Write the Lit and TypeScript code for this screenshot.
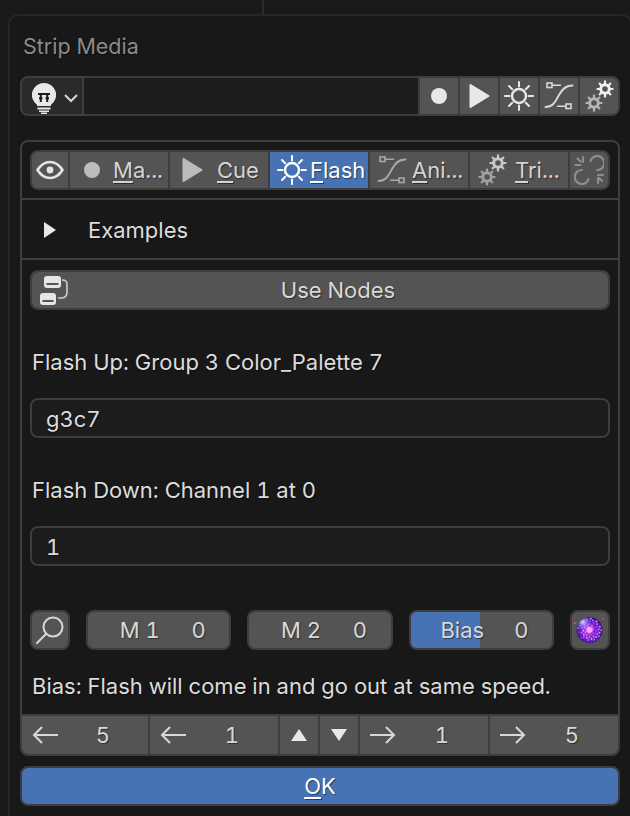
import { LitElement, html, css, svg } from "lit";
import { customElement } from "lit/decorators.js";

const sun = (c: string) => svg`<svg class="ic" width="30" height="30" viewBox="0 0 30 30" fill="none" stroke=${c} stroke-width="2" stroke-linecap="round">
  <circle cx="15" cy="15" r="7" stroke-width="2.4"/>
  <path d="M15 1v4.5M15 24.5V29M1 15h4.5M24.5 15H29M5 5l3.2 3.2M21.8 21.8 25 25M25 5l-3.2 3.2M8.2 21.8 5 25"/></svg>`;
const curve = (c: string) => svg`<svg class="ic" width="30" height="30" viewBox="0 0 30 30" fill="none" stroke=${c} stroke-linecap="round">
  <rect x="3" y="2" width="5" height="4.500" stroke-width="1.600"/><path d="M8.500 4.200h8" stroke-width="1.600"/>
  <rect x="22" y="23" width="5" height="4.500" stroke-width="1.600"/><path d="M13.500 25.200h8" stroke-width="1.600"/>
  <path d="M1.500 26C10 26 12 19 15 14S21 4.500 28.500 4.500" stroke-width="2"/></svg>`;
const gearAt = (x: number, y: number, c: string) => {
  const rays = [0, 45, 90, 135].map(a => {
    const r = a * Math.PI / 180, dx = Math.cos(r) * 8.4, dy = Math.sin(r) * 8.4;
    return svg`<path d="M${x - dx} ${y - dy}L${x + dx} ${y + dy}" stroke-width="2.200"/>`;
  });
  return svg`<g stroke=${c} fill="none">${rays}<circle cx=${x} cy=${y} r="4.300" stroke-width="3" fill="#545454"/></g>`;
};
const gears = (c1: string, c2: string) => svg`<svg class="ic" width="32" height="32" viewBox="0 0 32 32">${gearAt(22, 9, c1)}${gearAt(11, 23, c2)}</svg>`;
const dot = (c: string) => svg`<svg class="ic" width="16" height="16" viewBox="0 0 16 16"><circle cx="8" cy="8" r="8" fill=${c}/></svg>`;
const play = (c: string) => svg`<svg class="ic" width="21" height="26" viewBox="0 0 21 26"><path d="M1.500 2 19.500 13 1.500 24Z" fill=${c} stroke=${c} stroke-width="2" stroke-linejoin="round"/></svg>`;
const eye = svg`<svg class="ic" width="28" height="20" viewBox="0 0 28 20" fill="none" stroke="#e4e4e4"><path d="M1.500 10C5 4.500 9 2 14 2s9 2.500 12.500 8C23 15.500 19 18 14 18S5 15.500 1.500 10Z" stroke-width="2.600"/><circle cx="14" cy="10" r="3.400" fill="#e4e4e4" stroke="none"/></svg>`;
const bulb = svg`<svg class="ic" width="24" height="31" viewBox="0 0 24 31">
  <path d="M12 0a12 12 0 0 1 7 21.800V23H5v-1.200A12 12 0 0 1 12 0Z" fill="#e8e8e8"/>
  <path d="M6 11h12M8.800 11v8M15.200 11v8M7 15.200h3.500M13.500 15.200h3.500" stroke="#1c1c1c" stroke-width="2" fill="none"/>
  <rect x="5.500" y="24.500" width="13" height="2" fill="#e8e8e8"/><rect x="7" y="27.500" width="10" height="1.500" fill="#e8e8e8"/><rect x="9" y="29.500" width="6" height="1.500" fill="#e8e8e8"/></svg>`;
const chevron = svg`<svg class="ic" width="14" height="9" viewBox="0 0 14 9" fill="none" stroke="#d8d8d8" stroke-width="2"><path d="M1 1l6 6 6-6"/></svg>`;
const link = svg`<svg class="ic" width="30" height="30" viewBox="0 0 30 30" fill="none" stroke="#8d8d8d" stroke-width="2.200" stroke-linecap="round">
  <path d="M16.500 6A7 7 0 1 1 23 15"/><path d="M14.500 24A7 7 0 1 1 8 15"/>
  <path d="M9 2v5M1.500 10h5M3.500 3.500l3 3M24 28v-5M29 20h-5M28 26l-3-3"/></svg>`;
const nodes = svg`<svg class="ic" width="30" height="30" viewBox="0 0 30 30">
  <rect x="6" y="1" width="17" height="12" rx="3" fill="#e6e6e6"/><rect x="2" y="18" width="16" height="12" rx="3" fill="#e6e6e6"/>
  <path d="M8.500 9h12M4.500 26h11" stroke="#555" stroke-width="2"/>
  <path d="M24 5c3.500 0 5 1 5 4v8c0 4-1.500 6-5.500 6H20" fill="none" stroke="#cfcfcf" stroke-width="1.600"/></svg>`;
const search = svg`<svg class="ic" width="30" height="30" viewBox="0 0 30 30" fill="none" stroke="#d8d8d8" stroke-width="2"><circle cx="18" cy="12" r="9.500"/><path d="M11 19 2 28" stroke-linecap="round"/></svg>`;
const left = svg`<svg class="ic" width="26" height="18" viewBox="0 0 26 18" fill="none" stroke="#d8d8d8" stroke-width="2"><path d="M26 9H2M10 1 2 9l8 8"/></svg>`;
const right = svg`<svg class="ic" width="26" height="18" viewBox="0 0 26 18" fill="none" stroke="#d8d8d8" stroke-width="2"><path d="M0 9h24M16 1l8 8-8 8"/></svg>`;
const tri = (down: boolean) => svg`<svg class="ic" width="16" height="12" viewBox="0 0 16 12"><path d=${down ? "M0 0h16L8 12Z" : "M8 0l8 12H0Z"} fill="#e8e8e8"/></svg>`;
const tinyPlay = svg`<svg class="ic" width="12" height="16" viewBox="0 0 12 16"><path d="M0 0 12 8 0 16Z" fill="#e8e8e8"/></svg>`;
const sparkles = Array.from({ length: 60 }, (_, i) => {
  const a = i * 2.399, r = 12 * Math.sqrt((i + 0.5) / 60);
  const colors = ["#e070ff", "#9a40e8", "#f8b0ff", "#5a28c0", "#ff70e8"];
  return svg`<rect x=${(15 + r * Math.cos(a)).toFixed(1)} y=${(14.500 + r * Math.sin(a)).toFixed(1)} width="1.500" height="1.500" fill=${colors[i % 5]}/>`;
});
const ball = svg`<svg class="ic" width="34" height="32" viewBox="-1 -1 34 32"><defs>
  <radialGradient id="db" cx="50%" cy="52%" r="55%"><stop offset="0" stop-color="#ff70f0"/><stop offset=".35" stop-color="#a030e0"/><stop offset=".8" stop-color="#4a1ab0"/><stop offset="1" stop-color="#1c0c58"/></radialGradient>
  <radialGradient id="dh" cx="25%" cy="20%" r="32%"><stop offset="0" stop-color="#d8d8ff"/><stop offset="1" stop-color="#7060ff" stop-opacity="0"/></radialGradient></defs>
  <circle cx="15.500" cy="15" r="13" fill="url(#db)"/>${sparkles}<circle cx="15.500" cy="15" r="13" fill="url(#dh)"/>
  <circle cx="15.500" cy="15" r="3" fill="#ffa0f4"/><rect x="0" y="7" width="1.500" height="2" fill="#d050d0"/><rect x="28" y="3" width="1.500" height="1.500" fill="#d050d0"/></svg>`;

@customElement("app-root")
export class AppRoot extends LitElement {
  static styles = css`
    :host { display: block; position: relative; width: 630px; height: 816px; overflow: hidden; background: #1a1a1a;
      font-family: Inter, "Noto Sans", sans-serif; font-size: 22px; font-variant-numeric: tabular-nums; color: #e0e0e0; text-shadow: 1px 1px 1px rgba(0,0,0,.45); }
    .topline { width: 2px; height: 14px; margin-left: 262px; background: #2c2c2c; }
    .popup { box-sizing: border-box; width: 624px; height: 820px; margin-left: 8px; background: #181818; border: 2px solid #262626; border-radius: 10px; padding: 0 10px; }
    .title { height: 60px; padding: 15px 0 0 3px; box-sizing: border-box; line-height: 30px; color: #8a8a8a; font-size: 21.500px; }
    .bar { display: flex; gap: 2px; background: #3d3d3d; border: 2px solid #3d3d3d; border-radius: 8px; overflow: hidden; }
    .bar > * { display: flex; align-items: center; background: #545454; box-sizing: border-box; }
    .ic { display: block; flex: none; }
    .hdr { height: 40px; box-sizing: border-box; }
    .drop { width: 60px; background: #2a2a2a; padding: 4px 0 0 10px; gap: 8px; }
    .field { flex: 1; background: #1c1c1c; }
    .ib { width: 38px; justify-content: center; flex: none; }
    .panel { margin-top: 24px; height: 616px; box-sizing: border-box; border: 2px solid #3d3d3d; border-radius: 8px; overflow: hidden; position: relative; }
    .tabs { margin: 8px; height: 40px; box-sizing: border-box; }
    .tab { width: 98px; padding-left: 6px; color: #d4d4d4; white-space: nowrap; line-height: 36px; }
    .tab .ico { width: 32px; display: flex; justify-content: center; flex: none; margin-right: 5px; }
    .tab.cue .ico { margin-right: 9px; }
    .tab.tri .ico { margin-right: 7px; }
    .tab.ani .ico { margin-right: 4px; }
    .tab.on .ico { margin-right: 2px; }
    .tab.on { background: #4772b3; color: #fff; }
    .lnk { width: 38px; justify-content: center; }
    .eye { width: 36px; justify-content: center; }
    u { text-decoration-thickness: 2px; text-underline-offset: 3px; text-decoration-skip-ink: none; }
    .sep { height: 2px; background: #3d3d3d; }
    .disc { height: 58px; display: flex; align-items: center; padding: 2px 0 0 22px; box-sizing: border-box; gap: 32px; color: #dcdcdc; }
    .body { padding: 10px 8px 0; }
    .use { height: 40px; box-sizing: border-box; position: relative; }
    .use > div { flex: 1; justify-content: center; color: #d8d8d8; padding-left: 36px; }
    .use .ni { position: absolute; left: 6px; top: 3px; background: none; padding: 0; }
    .label { height: 40px; margin-top: 32px; line-height: 40px; padding-left: 2px; color: #dcdcdc; }
    .input { height: 40px; box-sizing: border-box; margin-top: 16px; border: 2px solid #3d3d3d; border-radius: 8px; background: #1c1c1c; padding-left: 14px; line-height: 38px; color: #dcdcdc; }
    .row { display: flex; gap: 16px; margin-top: 44px; }
    .sq { width: 40px; height: 40px; box-sizing: border-box; flex: none; border: 2px solid #3d3d3d; border-radius: 8px; background: #545454; display: flex; align-items: center; justify-content: center; }
    .slider { flex: 1; height: 40px; box-sizing: border-box; border: 2px solid #3d3d3d; border-radius: 8px; background: #545454; display: flex; justify-content: center; align-items: center; color: #d8d8d8; position: relative; overflow: hidden; }
    .slider .l { width: 80px; text-align: center; position: relative; }
    .slider .v { width: 38px; text-align: center; position: relative; }
    .fill { position: absolute; left: 0; top: 0; bottom: 0; background: #4772b3; }
    .note { height: 40px; margin-top: 16px; line-height: 40px; padding-left: 2px; color: #dcdcdc; }
    .foot { position: absolute; left: 0; right: 0; bottom: 0; height: 40px; display: flex; gap: 2px; background: #3d3d3d; padding-top: 2px; box-sizing: border-box; }
    .foot > div { display: flex; align-items: center; background: #545454; color: #d8d8d8; }
    .step { width: 128px; padding-left: 10px; box-sizing: border-box; }
    .step.first { width: 126px; padding-left: 10px; }
    .step span { flex: 1; text-align: center; }
    .arr { width: 38px; justify-content: center; }
    .ok { height: 40px; box-sizing: border-box; margin-top: 10px; border: 2px solid #3d3d3d; border-radius: 8px; background: #4772b3; display: flex; align-items: center; justify-content: center; color: #fff; }
  `;

  private slider(label: string, value: string, fill = 0) {
    return html`<div class="slider">
      ${fill ? html`<div class="fill" style="width:${fill}%"></div>` : ""}
      <span class="l">${label}</span><span class="v">${value}</span></div>`;
  }

  render() {
    return html`
      <div class="topline"></div>
      <div class="popup">
        <div class="title">Strip Media</div>
        <div class="bar hdr">
          <div class="drop">${bulb}${chevron}</div>
          <div class="field"></div>
          <div class="ib">${dot("#e8e8e8")}</div>
          <div class="ib">${play("#e8e8e8")}</div>
          <div class="ib">${sun("#e8e8e8")}</div>
          <div class="ib">${curve("#d8d8d8")}</div>
          <div class="ib">${gears("#f0f0f0", "#b4b4b4")}</div>
        </div>
        <div class="panel">
          <div class="bar tabs">
            <div class="eye">${eye}</div>
            <div class="tab"><span class="ico">${dot("#bcbcbc")}</span><span><u>M</u>a...</span></div>
            <div class="tab cue"><span class="ico">${play("#bcbcbc")}</span><span><u>C</u>ue</span></div>
            <div class="tab on"><span class="ico">${sun("#fff")}</span><span><u>F</u>lash</span></div>
            <div class="tab ani"><span class="ico">${curve("#a8a8a8")}</span><span><u>A</u>ni...</span></div>
            <div class="tab tri"><span class="ico">${gears("#c8c8c8", "#a0a0a0")}</span><span><u>T</u>ri...</span></div>
            <div class="lnk">${link}</div>
          </div>
          <div class="sep"></div>
          <div class="disc">${tinyPlay}<span>Examples</span></div>
          <div class="sep"></div>
          <div class="body">
            <div class="bar use"><div>Use Nodes</div><div class="ni">${nodes}</div></div>
            <div class="label">Flash Up: Group 3 Color_Palette 7</div>
            <div class="input">g3c7</div>
            <div class="label">Flash Down: Channel 1 at 0</div>
            <div class="input">1</div>
            <div class="row">
              <div class="sq">${search}</div>
              ${this.slider("M 1", "0")}
              ${this.slider("M 2", "0")}
              ${this.slider("Bias", "0", 49)}
              <div class="sq">${ball}</div>
            </div>
            <div class="note">Bias: Flash will come in and go out at same speed.</div>
          </div>
          <div class="foot">
            <div class="step first">${left}<span>5</span></div>
            <div class="step">${left}<span>1</span></div>
            <div class="arr">${tri(false)}</div>
            <div class="arr">${tri(true)}</div>
            <div class="step">${right}<span>1</span></div>
            <div class="step">${right}<span>5</span></div>
          </div>
        </div>
        <div class="ok"><span><u>O</u>K</span></div>
      </div>`;
  }
}
